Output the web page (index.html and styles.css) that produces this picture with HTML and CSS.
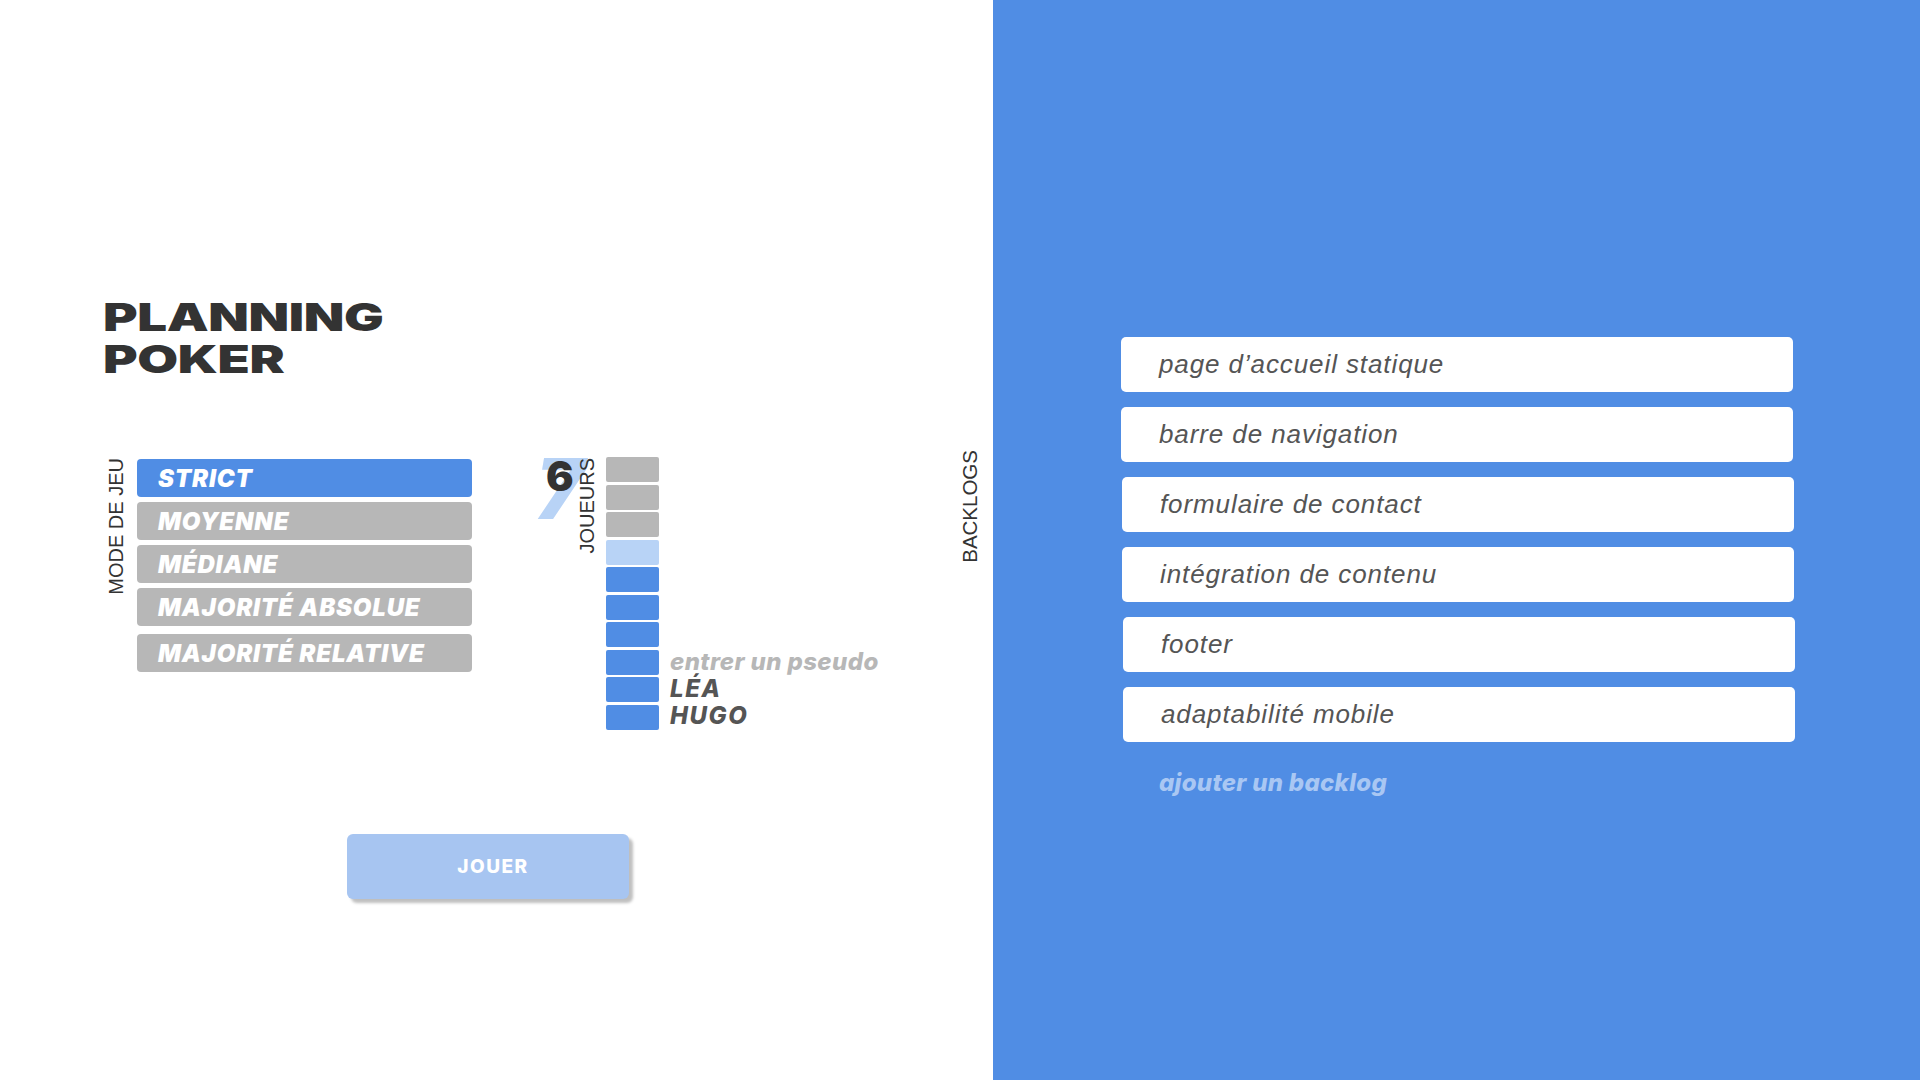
FILE: index.html
```html
<!DOCTYPE html>
<html lang="fr">
<head>
<meta charset="utf-8">
<title>Planning Poker</title>
<link rel="stylesheet" href="styles.css">
</head>
<body>
<div class="page">
  <section class="setup">
    <div class="setup-main">
      <h1 class="title"><span>PLANNING</span><span>POKER</span></h1>
      <div class="config">
        <div class="modes">
          <div class="vlabel mode-label">MODE DE JEU</div>
          <ul class="mode-list">
            <li class="mode active">STRICT</li>
            <li class="mode">MOYENNE</li>
            <li class="mode">MÉDIANE</li>
            <li class="mode">MAJORITÉ ABSOLUE</li>
            <li class="mode last">MAJORITÉ RELATIVE</li>
          </ul>
        </div>
        <div class="players">
          <div class="count"><span class="count-max">7</span><span class="count-cur">6</span></div>
          <div class="vlabel players-label">JOUEURS</div>
          <div class="slots">
            <div class="slot off"></div>
            <div class="slot off"></div>
            <div class="slot off"></div>
            <div class="slot next"></div>
            <div class="slot on"></div>
            <div class="slot on"></div>
            <div class="slot on"></div>
            <div class="slot on"></div>
            <div class="slot on"></div>
            <div class="slot on"></div>
          </div>
          <div class="names">
            <div class="name placeholder">entrer un pseudo</div>
            <div class="name">LÉA</div>
            <div class="name">HUGO</div>
          </div>
        </div>
      </div>
      <button class="play">JOUER</button>
    </div>
    <div class="vlabel backlog-label">BACKLOGS</div>
  </section>
  <section class="backlogs">
    <ul class="backlog-list">
      <li class="backlog">page d’accueil statique</li>
      <li class="backlog">barre de navigation</li>
      <li class="backlog">formulaire de contact</li>
      <li class="backlog">intégration de contenu</li>
      <li class="backlog">footer</li>
      <li class="backlog">adaptabilité mobile</li>
    </ul>
    <div class="add">ajouter un backlog</div>
  </section>
</div>
</body>
</html>
```
FILE: styles.css
```css
* { box-sizing: border-box; }
html, body { margin: 0; padding: 0; }
body { width: 1920px; height: 1080px; overflow: hidden; background: #fff; font-family: Inter, "Liberation Sans", sans-serif; }
ul { list-style: none; margin: 0; padding: 0; }

.page { display: flex; width: 1920px; height: 1080px; }

.setup { width: 993px; display: flex; justify-content: space-between; align-items: flex-start; }
.setup-main { padding-left: 105px; padding-top: 296px; display: flex; flex-direction: column; align-items: flex-start; }

.title { margin: 0 0 0 -2px; display: flex; flex-direction: column; font-weight: 900; font-size: 38px; line-height: 42px; color: #333; transform: scaleX(1.39); transform-origin: left top; letter-spacing: -0.3px; }

.vlabel { writing-mode: vertical-rl; transform: rotate(180deg); font-family: "Liberation Sans", Arial, sans-serif; font-weight: 400; font-size: 20px; color: #333; white-space: nowrap; }

.config { display: flex; align-items: flex-start; gap: 66px; margin-top: 77px; }

.modes { display: flex; align-items: flex-start; gap: 12px; margin-left: 3px; margin-top: 2px; }
.mode-label { line-height: 17px; margin-top: -1px; }
.mode-list { width: 335px; display: flex; flex-direction: column; gap: 5px; }
.mode { height: 38px; border-radius: 4px; background: #b7b7b7; color: #fff; font-weight: 900; font-style: italic; font-size: 24px; line-height: 39px; padding-left: 21px; letter-spacing: 0.8px; }
.mode.active { background: #508de4; }
.mode.last { margin-top: 3px; }

.players { display: flex; align-items: flex-start; }
.count { position: relative; width: 40px; height: 64px; }
.count-max { position: absolute; left: -3px; top: -10px; font-size: 84px; line-height: 1; font-weight: 800; font-style: italic; color: #b8d3f6; }
.count-cur { position: absolute; left: 8px; top: -1px; font-size: 41px; line-height: 1; font-weight: 900; color: #333; }
.players-label { line-height: 14px; margin-left: 2px; margin-top: 1px; }
.slots { display: flex; flex-direction: column; gap: 2.5px; margin-left: 12px; }
.slot { width: 53px; height: 25px; border-radius: 2px; }
.slot.off { background: #b7b7b7; }
.slot.next { background: #b8d3f6; }
.slot.on { background: #508de4; }
.names { align-self: flex-end; margin-left: 11px; }
.name { font-size: 24px; line-height: 27.3px; font-weight: 800; font-style: italic; color: #555; letter-spacing: 1.6px; }
.name.placeholder { color: #b7b7b7; letter-spacing: 0.4px; }

.play { margin-top: 104px; margin-left: 242px; width: 282px; height: 65px; border: none; border-radius: 6px; background: #a7c5f1; color: #fff; font-family: inherit; font-weight: 800; font-size: 19px; letter-spacing: 1.5px; padding: 0 0 0 10px; box-shadow: 4px 4px 3px rgba(0,0,0,0.25); }

.backlog-label { font-size: 20.5px; line-height: 15px; margin-top: 450px; margin-right: 16px; }

.backlogs { flex: 1; background: #508de4; padding-left: 128px; padding-top: 337px; }
.backlog-list { display: flex; flex-direction: column; gap: 15px; }
.backlog { width: 672px; height: 55px; background: #fff; border-radius: 5px; padding-left: 38px; font-family: "Liberation Sans", Arial, sans-serif; font-size: 26px; line-height: 55px; font-style: italic; color: #555; letter-spacing: 0.9px; }
.backlog:nth-child(3), .backlog:nth-child(4) { margin-left: 1px; }
.backlog:nth-child(5), .backlog:nth-child(6) { margin-left: 2px; }
.add { margin-top: 26px; padding-left: 38px; font-size: 24px; line-height: 30px; font-weight: 800; font-style: italic; color: #a9c7f3; letter-spacing: 0.3px; }
```
